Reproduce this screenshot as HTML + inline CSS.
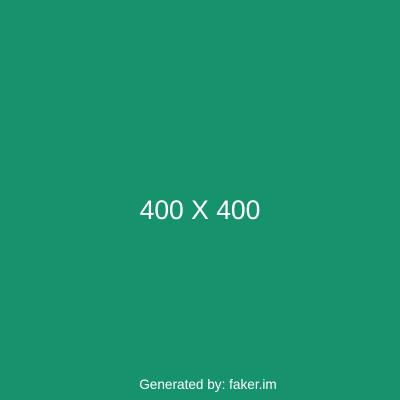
<!DOCTYPE html>
<html><head><style>
html,body{margin:0;padding:0}
body{width:400px;height:400px;background:#16926c;position:relative;overflow:hidden;font-family:"Liberation Sans",sans-serif;color:#fff}
.m{position:absolute;left:0;width:400px;top:195px;text-align:center;font-size:26.5px;line-height:30px}
.f{position:absolute;left:0;width:416px;top:377px;text-align:center;font-size:13.6px;line-height:16px}
</style></head><body>
<div class="m">400 X 400</div>
<div class="f">Generated by: faker.im</div>
</body></html>
